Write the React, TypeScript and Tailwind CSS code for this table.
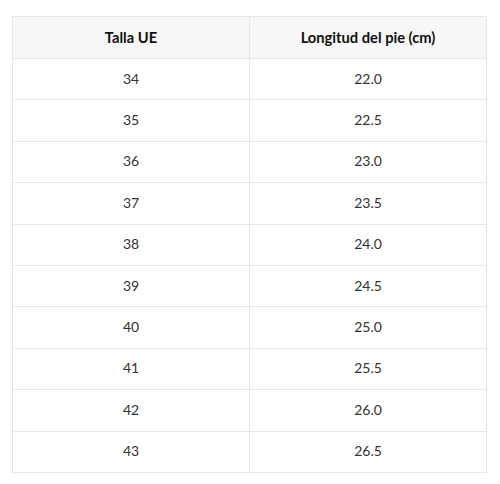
const rows: [string, string][] = [
  ['34', '22.0'],
  ['35', '22.5'],
  ['36', '23.0'],
  ['37', '23.5'],
  ['38', '24.0'],
  ['39', '24.5'],
  ['40', '25.0'],
  ['41', '25.5'],
  ['42', '26.0'],
  ['43', '26.5'],
];

export default function App() {
  return (
    <div className="min-h-[484px] bg-white pt-4 pl-3" style={{ fontFamily: 'Lato, "Liberation Sans", sans-serif' }}>
      <table className="w-[475px] table-fixed border-collapse border border-[#e6e6e6] text-center text-[14px]">
        <thead>
          <tr className="h-[42px] bg-[#f7f7f7]">
            <th className="border border-[#e6e6e6] pb-px text-[14.7px] font-bold text-[#111]">Talla UE</th>
            <th className="border border-[#e6e6e6] pb-px text-[14.7px] font-bold text-[#111]">Longitud del pie (cm)</th>
          </tr>
        </thead>
        <tbody>
          {rows.map(([size, length]) => (
            <tr key={size} className="h-[41.4px]">
              <td className="border border-[#e6e6e6] pb-0.5 text-[#333]">{size}</td>
              <td className="border border-[#e6e6e6] pb-0.5 text-[#333]">{length}</td>
            </tr>
          ))}
        </tbody>
      </table>
    </div>
  );
}
